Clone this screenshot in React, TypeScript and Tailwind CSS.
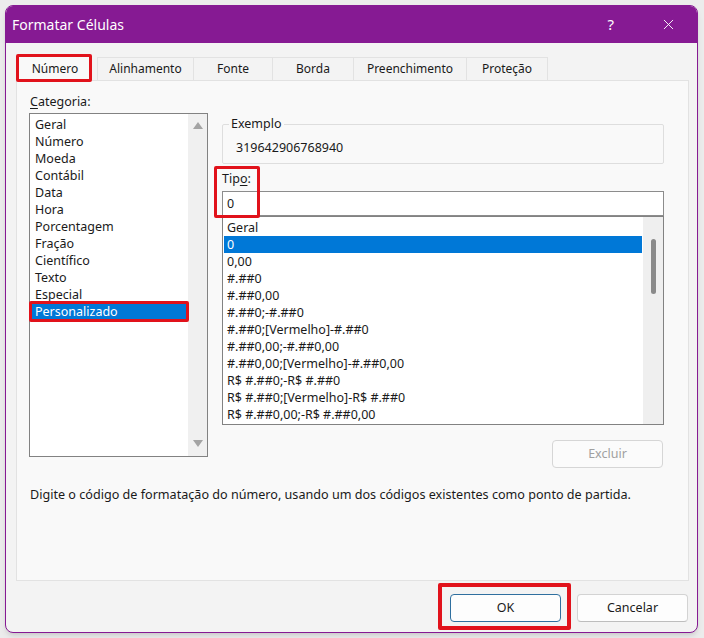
import { X } from "lucide-react";

const categorias = [
  "Geral",
  "Número",
  "Moeda",
  "Contábil",
  "Data",
  "Hora",
  "Porcentagem",
  "Fração",
  "Científico",
  "Texto",
  "Especial",
  "Personalizado",
];

const tipos = [
  "Geral",
  "0",
  "0,00",
  "#.##0",
  "#.##0,00",
  "#.##0;-#.##0",
  "#.##0;[Vermelho]-#.##0",
  "#.##0,00;-#.##0,00",
  "#.##0,00;[Vermelho]-#.##0,00",
  "R$ #.##0;-R$ #.##0",
  "R$ #.##0;[Vermelho]-R$ #.##0",
  "R$ #.##0,00;-R$ #.##0,00",
];

const tabs = ["Alinhamento", "Fonte", "Borda", "Preenchimento", "Proteção"];
const tabWidths = ["w-[96px]", "w-[79px]", "w-[81px]", "w-[113px]", "w-[82px]"];

function Arrow({ down }: { down?: boolean }) {
  return (
    <svg width="10" height="7" viewBox="0 0 10 7">
      <polygon
        points={down ? "0,0 10,0 5,7" : "5,0 10,7 0,7"}
        fill="#a3a3a3"
      />
    </svg>
  );
}

export default function App() {
  return (
    <div
      className="w-[704px] h-[638px] bg-[#ececec] pt-[5px] pl-[5px] text-[#1a1a1a]"
      style={{ fontFamily: '"Noto Sans", "Open Sans", sans-serif' }}
    >
      <div className="w-[693px] h-[628px] rounded-lg border border-[#861a93] bg-[#f3f3f3] overflow-hidden flex flex-col shadow-md">
        {/* Title bar */}
        <div className="h-[37px] bg-[#861a93] flex items-center text-white shrink-0">
          <span className="ml-[6px] text-[14px]">Formatar Células</span>
          <span className="ml-auto mr-[46px] text-[15px]">?</span>
          <X size={17} strokeWidth={1.3} className="mr-[20px]" />
        </div>

        {/* Tabs */}
        <div className="flex items-end mt-[12px] ml-[12px] h-[25px] text-[12px]">
          <div className="relative w-[74px] h-[26px] bg-[#f9f9f9] border border-b-0 border-[#e2e2e2] flex items-center justify-center z-10 -mb-px">
            Número
            <span className="absolute -left-[3px] -top-[2px] -right-px -bottom-px border-[3px] border-[#e1121b] rounded-[2px]" />
          </div>
          <div className="w-[5px]" />
          {tabs.map((t, i) => (
            <div
              key={t}
              className={`${tabWidths[i]} h-[23px] border-l border-t border-[#e2e2e2] last:border-r flex items-center justify-center`}
            >
              {t}
            </div>
          ))}
        </div>

        {/* Panel */}
        <div className="ml-[10px] w-[673px] h-[501px] border border-[#e2e2e2] bg-[#f9f9f9] pt-[12px] px-[12px] text-[12.5px]">
          <div className="flex gap-[14px]">
            {/* Left column */}
            <div className="w-[179px]">
              <div className="h-[18px] leading-[18px] pl-px">
                <span className="underline underline-offset-2">C</span>ategoria:
              </div>
              <div className="mt-[2px] h-[344px] border border-[#828282] bg-white flex">
                <div className="flex-1 pt-[2px] pl-px">
                  {categorias.map((c) => (
                    <div
                      key={c}
                      className={`relative h-[17px] leading-[17px] pl-[4px] ${
                        c === "Personalizado" ? "bg-[#0078d7] text-white mr-px" : ""
                      }`}
                    >
                      {c}
                      {c === "Personalizado" && (
                        <span className="absolute -left-[2px] -top-[2px] -right-[2px] -bottom-[2px] border-[3px] border-[#e1121b] rounded-[2px]" />
                      )}
                    </div>
                  ))}
                </div>
                <div className="w-[19px] bg-[#f0f0f0] flex flex-col items-center justify-between pt-[8px] pb-[9px]">
                  <Arrow />
                  <Arrow down />
                </div>
              </div>
            </div>

            {/* Right column */}
            <div className="relative w-[442px]">
              <fieldset className="mt-[24px] h-[47px] border border-[#dedede] rounded-[2px]">
                <legend className="ml-[6px] px-[2px] leading-[14px]">Exemplo</legend>
                <div className="pl-[13px] pt-[8px] leading-[17px]">319642906768940</div>
              </fieldset>
              <div className="mt-[6px] h-[17px] leading-[17px]">
                Tip<span className="underline underline-offset-2">o</span>:
              </div>
              <div className="mt-[4px] h-[25px] border border-[#8c8c8c] bg-white pl-[4px] leading-[23px]">
                0
              </div>
              <div className="h-[209px] border border-[#828282] bg-white flex overflow-hidden">
                <div className="flex-1 pt-[2px] pl-px">
                  {tipos.map((t) => (
                    <div
                      key={t}
                      className={`h-[17px] leading-[17px] pl-[3px] whitespace-nowrap ${
                        t === "0" ? "bg-[#0078d7] text-white mr-px" : ""
                      }`}
                    >
                      {t}
                    </div>
                  ))}
                </div>
                <div className="w-[20px] bg-[#efefef] flex justify-center pt-[22px]">
                  <div className="w-[5px] h-[55px] rounded-full bg-[#8a8a8a]" />
                </div>
              </div>
              <div className="flex justify-end mt-[15px] pr-px">
                <div className="w-[111px] h-[28px] rounded-[4px] border border-[#d6d6d6] bg-[#fbfbfb] flex items-center justify-center text-[#a0a0a0]">
                  Excluir
                </div>
              </div>
              <span className="absolute left-[-8px] top-[73px] w-[46px] h-[52px] border-[3px] border-[#e1121b] rounded-[2px]" />
            </div>
          </div>
          <div className="mt-[18px] pl-px leading-[17px] whitespace-nowrap text-[12.6px]">
            Digite o código de formatação do número, usando um dos códigos existentes como ponto de partida.
          </div>
        </div>

        {/* Buttons */}
        <div className="flex justify-end gap-[16px] mt-[13px] mr-[9px] text-[12.5px]">
          <div className="relative w-[111px] h-[28px] rounded-[4px] border border-[#2f6f9f] bg-[#fdfdfd] flex items-center justify-center">
            OK
            <span className="absolute -left-[13px] -right-[11px] -top-[12px] -bottom-[9px] border-[4px] border-[#e1121b] rounded-[2px]" />
          </div>
          <div className="w-[111px] h-[28px] rounded-[4px] border border-[#d3d3d3] border-b-[#bdbdbd] bg-[#fdfdfd] flex items-center justify-center">
            Cancelar
          </div>
        </div>
      </div>
    </div>
  );
}
